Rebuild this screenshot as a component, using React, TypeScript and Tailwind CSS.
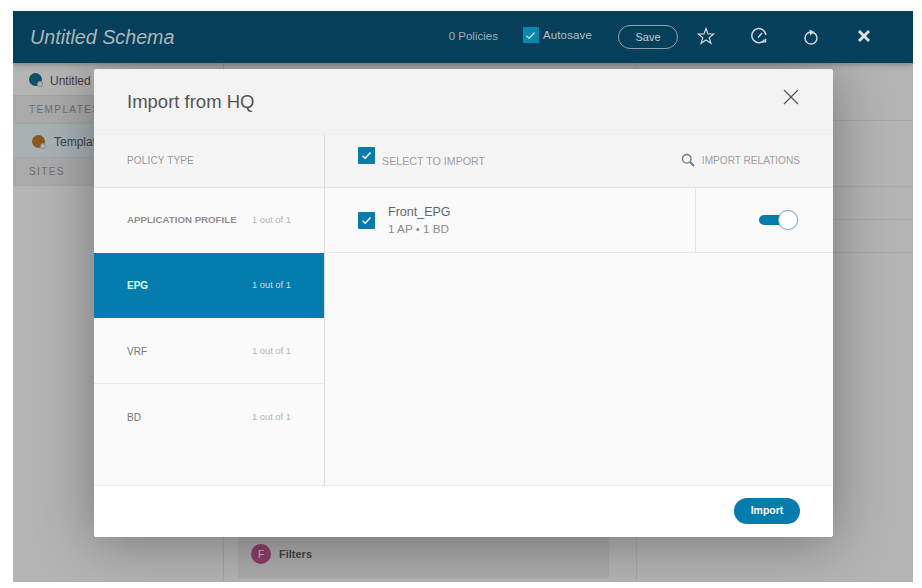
import React from "react";

const font = { fontFamily: '"Liberation Sans", Arial, sans-serif' };

function Check({ className = "" }: { className?: string }) {
  return (
    <span className={`flex h-[17px] w-[17px] items-center justify-center rounded-[1px] bg-[#047cad] ${className}`}>
      <svg width="11" height="9" viewBox="0 0 11 9" fill="none">
        <path d="M1.5 4.8 L4.2 7.2 L9.5 1.6" stroke="#fff" strokeWidth="1.5" />
      </svg>
    </span>
  );
}

function TypeRow({ name, active, bold, h, border, low }: { name: string; active?: boolean; bold?: boolean; h: string; border?: boolean; low?: boolean }) {
  return (
    <div className={`flex items-center justify-between pl-[33px] pr-[33px] ${h} ${low ? "pt-[2px]" : ""} ${active ? "bg-[#047cad]" : ""} ${border ? "border-b border-[#ebebeb]" : ""}`}>
      <span className={active ? "text-[10px] font-bold text-[#eef6f9]" : bold ? "text-[9.7px] font-bold text-[#8f8f8f]" : "text-[10px] text-[#777]"}>{name}</span>
      <span className={`text-[9.4px] ${active ? "text-[#c5dfea]" : "text-[#b5b5b5]"}`}>1 out of 1</span>
    </div>
  );
}

function Badge({ color }: { color: string }) {
  return (
    <span className={`relative h-[13px] w-[13px] rounded-full ${color}`}>
      <span className="absolute bottom-[-1px] right-[-1px] h-[6px] w-[6px] rounded-full border border-[#888] bg-[#b5b5b5]" />
    </span>
  );
}

export default function App() {
  return (
    <div className="h-[588px] w-[922px] overflow-hidden bg-white px-[13px] pt-[11px]" style={font}>
      <div className="relative flex h-[571px] w-[900px] flex-col overflow-hidden bg-[#b4b4b4]">
        {/* App header */}
        <header className="z-10 flex h-[52px] shrink-0 items-center bg-[#053f59] pl-[17px] shadow-[0_2px_5px_rgba(0,0,0,0.25)]">
          <h1 className="mt-[1px] text-[19.7px] italic text-[#aab6bc]">Untitled Schema</h1>
          <span className="ml-auto text-[11.5px] text-[#9fb0b9]">0 Policies</span>
          <span className="ml-[25px] -mt-[3px] flex items-center gap-[4px]">
            <span className="flex h-[16px] w-[16px] items-center justify-center bg-[#0b86ad]">
              <svg width="11" height="9" viewBox="0 0 11 9" fill="none">
                <path d="M1.5 4.8 L4.2 7.2 L9.5 1.6" stroke="#b8d9e6" strokeWidth="1.5" />
              </svg>
            </span>
            <span className="text-[11.4px] tracking-[0.2px] text-[#b4c0c6]">Autosave</span>
          </span>
          <button className="ml-[26px] h-[24px] w-[60px] rounded-full border border-[#8fa4af] text-[11px] text-[#c4ced3]">Save</button>
          <span className="ml-[19px] -mt-[3px] flex w-[18px] justify-center">
            <svg width="18" height="18" viewBox="0 0 18 18" fill="none">
              <path d="M9 1.5 L11 7 L16.6 7 L12.2 10.6 L13.9 16.2 L9 12.9 L4.1 16.2 L5.8 10.6 L1.4 7 L7 7 Z" stroke="#cfd8dc" strokeWidth="1.2" />
            </svg>
          </span>
          <span className="ml-[35px] -mt-[3px] flex w-[18px] justify-center">
            <svg width="18" height="18" viewBox="0 0 18 18" fill="none">
              <path d="M14.6 12.6 A7 7 0 1 1 15.8 8" stroke="#cfd8dc" strokeWidth="1.5" />
              <path d="M8 10.5 L12 6" stroke="#cfd8dc" strokeWidth="1.4" />
              <path d="M11.5 14.8 L15.5 14.8 L15.5 11.5" stroke="#cfd8dc" strokeWidth="1.3" />
            </svg>
          </span>
          <span className="ml-[34px] flex w-[18px] justify-center">
            <svg width="18" height="18" viewBox="0 0 18 18" fill="none">
              <circle cx="9" cy="10" r="6" stroke="#cfd8dc" strokeWidth="1.5" />
              <path d="M7.5 1.5 L12.5 4 L8 7.5 Z" fill="#cfd8dc" />
            </svg>
          </span>
          <span className="ml-[37px] mr-[42px] -mt-[3px] flex w-[14px] justify-center">
            <svg width="14" height="14" viewBox="0 0 14 14" fill="none">
              <path d="M2 2 L12 12 M12 2 L2 12" stroke="#d8dfe2" strokeWidth="3" />
            </svg>
          </span>
        </header>

        {/* Page behind the modal */}
        <div className="flex min-h-0 flex-1 text-[#3f3f3f]">
          <aside className="w-[211px] shrink-0 border-r border-[#a4a4a4] text-[12px]">
            <div className="flex h-[32px] items-center gap-[8px] pl-[16px]">
              <Badge color="bg-[#0f5266]" />
              <span className="mt-[3px]">Untitled</span>
            </div>
            <div className="flex h-[29px] items-center border-y border-[#a6a6a6] bg-[#aaaaaa] pl-[16px] text-[10px] tracking-[1.4px] text-[#6f6f6f]">TEMPLATES</div>
            <div className="flex h-[33px] items-center gap-[8px] bg-[#a7b1b6] pl-[19px] pt-[1px]">
              <Badge color="bg-[#8a5a1e]" />
              <span className="mt-[2px] ml-[1px]">Template</span>
            </div>
            <div className="flex h-[29px] items-center border-y border-[#a6a6a6] bg-[#aaaaaa] pl-[16px] text-[10px] tracking-[1.4px] text-[#6f6f6f]">SITES</div>
          </aside>
          <main className="flex flex-1 flex-col justify-end pb-[4px] pl-[14px] pr-[26px]">
            <div className="flex h-[60px] w-[371px] items-center gap-[8px] bg-[#ababab] pl-[13px] pt-[12px]">
              <span className="flex h-[20px] w-[20px] items-center justify-center rounded-full bg-[#8c3f68] text-[10px] text-[#d8b9c9]">F</span>
              <span className="text-[11px] font-bold text-[#444]">Filters</span>
            </div>
          </main>
          <aside className="w-[277px] shrink-0 border-l border-[#a8a8a8] pt-[57px]">
            <div className="h-[67px] border-y border-[#a8a8a8]" />
            <div className="h-[33px] border-b border-[#a8a8a8]" />
            <div className="h-[33px] border-b border-[#a8a8a8]" />
          </aside>
        </div>

        {/* Modal */}
        <div className="absolute left-[81px] top-[58px] flex h-[468px] w-[739px] flex-col overflow-hidden rounded-[3px] bg-white shadow-[0_5px_55px_rgba(0,0,0,0.35)]">
          <div className="flex h-[66px] shrink-0 items-center justify-between border-b border-[#efefef] bg-[#f3f3f3] pl-[33px] pr-[34px]">
            <h2 className="text-[18.5px] text-[#555]">Import from HQ</h2>
            <button className="-mt-[9px]">
              <svg width="16" height="16" viewBox="0 0 16 16" fill="none">
                <path d="M1 1 L15 15 M15 1 L1 15" stroke="#555" strokeWidth="1.2" />
              </svg>
            </button>
          </div>
          <div className="flex h-[53px] shrink-0 border-b border-[#e4e4e4] bg-[#f5f5f5]">
            <div className="flex w-[231px] shrink-0 items-center border-r border-[#dcdcdc] pb-[2px] pl-[33px] text-[10px] tracking-[0.15px] text-[#999]">POLICY TYPE</div>
            <div className="flex flex-1 items-center pl-[33px] pr-[33px]">
              <Check className="-mt-[11px]" />
              <span className="ml-[7px] mt-[1px] text-[10.7px] text-[#a0a0a0]">SELECT TO IMPORT</span>
              <svg className="ml-auto -mt-[2px]" width="14" height="14" viewBox="0 0 14 14" fill="none">
                <circle cx="5.8" cy="5.8" r="4.3" stroke="#777" strokeWidth="1.4" />
                <path d="M9 9 L13 13" stroke="#777" strokeWidth="2" />
              </svg>
              <span className="ml-[7px] text-[10.1px] text-[#a0a0a0]">IMPORT RELATIONS</span>
            </div>
          </div>
          <div className="flex min-h-0 flex-1 bg-[#fafafa]">
            <div className="flex w-[231px] shrink-0 flex-col border-r border-[#dcdcdc]">
              <TypeRow name="APPLICATION PROFILE" h="h-[65px]" bold />
              <TypeRow name="EPG" h="h-[65px]" active />
              <TypeRow name="VRF" h="h-[66px]" border low />
              <TypeRow name="BD" h="h-[65px]" low />
            </div>
            <div className="flex flex-1 flex-col">
              <div className="flex h-[65px] border-b border-[#e8e8e8]">
                <div className="flex w-[371px] items-center border-r border-[#e4e4e4] pl-[33px]">
                  <Check />
                  <div className="ml-[13px]">
                    <div className="text-[12.5px] leading-[16px] text-[#666]">Front_EPG</div>
                    <div className="mt-[1px] text-[11.7px] leading-[16px] text-[#8a8a8a]">1 AP • 1 BD</div>
                  </div>
                </div>
                <div className="flex flex-1 items-center justify-end pr-[44px]">
                  <div className="relative h-[10px] w-[30px] rounded-full bg-[#047cad]">
                    <span className="absolute right-[-9px] top-[-5px] h-[20px] w-[20px] rounded-full border border-[#6fb2d0] bg-white shadow-[0_0_2px_rgba(0,0,0,0.2)]" />
                  </div>
                </div>
              </div>
            </div>
          </div>
          <div className="flex h-[52px] shrink-0 items-center justify-end border-t border-[#ebebeb] bg-white pb-[2px] pr-[33px]">
            <button className="h-[26px] w-[66px] rounded-full bg-[#047cad] text-[10.5px] font-bold text-white">Import</button>
          </div>
        </div>
      </div>
    </div>
  );
}
